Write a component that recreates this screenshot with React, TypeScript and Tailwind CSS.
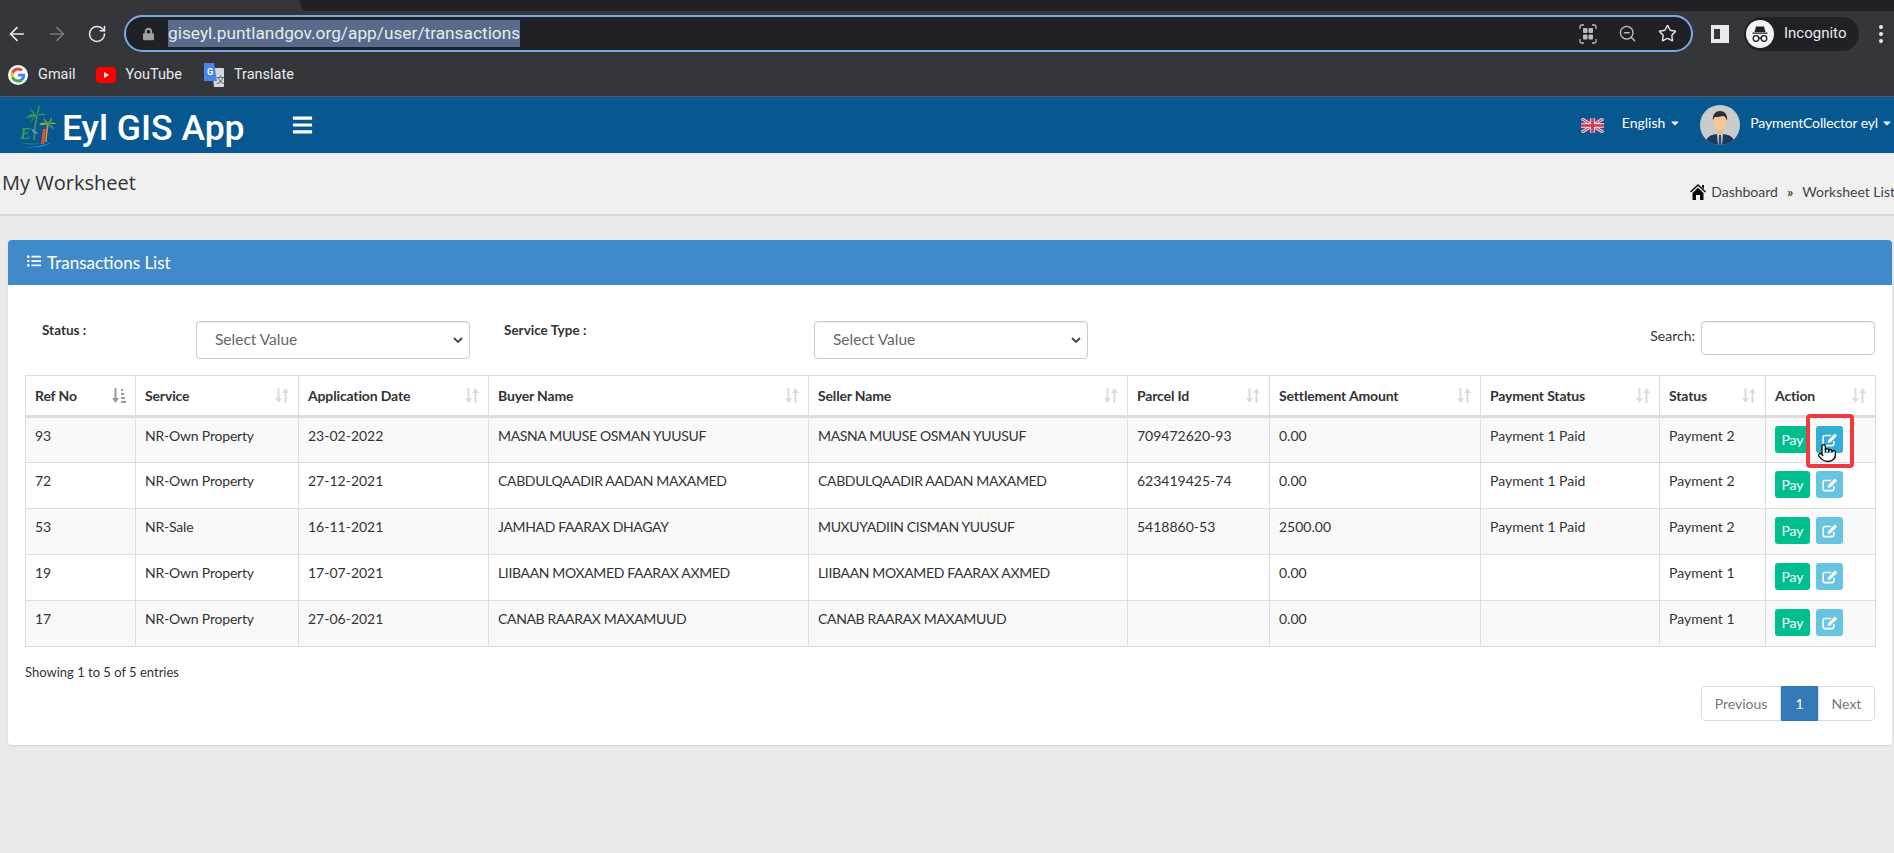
import { ArrowLeft, ArrowRight, RotateCw, ZoomOut, Star, Pointer } from 'lucide-react';
import { FaBars, FaListUl, FaLock, FaCaretDown } from 'react-icons/fa';

const rows = [
    { ref: '93', service: 'NR-Own Property', date: '23-02-2022', buyer: 'MASNA MUUSE OSMAN YUUSUF', seller: 'MASNA MUUSE OSMAN YUUSUF', parcel: '709472620-93', amount: '0.00', payment: 'Payment 1 Paid', status: 'Payment 2' },
    { ref: '72', service: 'NR-Own Property', date: '27-12-2021', buyer: 'CABDULQAADIR AADAN MAXAMED', seller: 'CABDULQAADIR AADAN MAXAMED', parcel: '623419425-74', amount: '0.00', payment: 'Payment 1 Paid', status: 'Payment 2' },
    { ref: '53', service: 'NR-Sale', date: '16-11-2021', buyer: 'JAMHAD FAARAX DHAGAY', seller: 'MUXUYADIIN CISMAN YUUSUF', parcel: '5418860-53', amount: '2500.00', payment: 'Payment 1 Paid', status: 'Payment 2' },
    { ref: '19', service: 'NR-Own Property', date: '17-07-2021', buyer: 'LIIBAAN MOXAMED FAARAX AXMED', seller: 'LIIBAAN MOXAMED FAARAX AXMED', parcel: '', amount: '0.00', payment: '', status: 'Payment 1' },
    { ref: '17', service: 'NR-Own Property', date: '27-06-2021', buyer: 'CANAB RAARAX MAXAMUUD', seller: 'CANAB RAARAX MAXAMUUD', parcel: '', amount: '0.00', payment: '', status: 'Payment 1' },
];

const columns = [
    { label: 'Ref No', width: 'w-[110px]' },
    { label: 'Service', width: 'w-[163px]' },
    { label: 'Application Date', width: 'w-[190px]' },
    { label: 'Buyer Name', width: 'w-[320px]' },
    { label: 'Seller Name', width: 'w-[319px]' },
    { label: 'Parcel Id', width: 'w-[142px]' },
    { label: 'Settlement Amount', width: 'w-[211px]' },
    { label: 'Payment Status', width: 'w-[179px]' },
    { label: 'Status', width: 'w-[106px]' },
    { label: 'Action', width: 'w-[110px]' },
];

function SortIcon({ active }: { active?: boolean }) {
    if (active) {
        return (
            <svg viewBox="0 0 14 15" className="w-[14px] h-[15px] shrink-0 text-[#9a9a9a]" fill="currentColor">
                <path d="M2.5 0h2v10H7l-3.5 5L0 10h2.5z" />
                <path d="M9 1h2v2H9zM9 5h3v2H9zM9 9h4v2H9zM9 13h5v2H9z" />
            </svg>
        );
    }
    return (
        <svg viewBox="0 0 14 15" className="w-[14px] h-[15px] shrink-0 text-[#dcdcdc]" fill="currentColor">
            <path d="M2.5 0h2v10H7l-3.5 5L0 10h2.5z" />
            <path d="M9.5 15h2V5H14L10.5 0 7 5h2.5z" />
        </svg>
    );
}

function EditIcon() {
    return (
        <svg viewBox="0 0 16 14" className="w-[16px] h-[14px]" fill="none">
            <path d="M9 2.500H3A1.800 1.800 0 001.200 4.300v6.500A1.800 1.800 0 003 12.600h7a1.800 1.800 0 001.800-1.800V8" stroke="#fff" strokeWidth="1.600" />
            <path d="M12.800.6l2.300 2.200-6.500 6.500-3 .8.700-3z" fill="#fff" />
        </svg>
    );
}

function GoogleIcon() {
    return (
        <svg viewBox="0 0 24 24" className="w-5 h-5 shrink-0">
            <circle cx="12" cy="12" r="12" fill="#fff" />
            <path fill="#4285F4" d="M20.6 12.2c0-.6-.1-1.200-.2-1.800H12v3.400h4.800c-.2 1.100-.8 2-1.800 2.700v2.200h2.900c1.700-1.600 2.700-3.800 2.700-6.500z" />
            <path fill="#34A853" d="M12 21c2.400 0 4.500-.8 5.900-2.200L15 16.500c-.8.500-1.800.9-3 .9-2.300 0-4.300-1.600-5-3.700H4v2.300C5.500 18.900 8.500 21 12 21z" />
            <path fill="#FBBC05" d="M7 13.700c-.4-1.100-.4-2.300 0-3.400V8H4c-1 2-1 4 0 8z" />
            <path fill="#EA4335" d="M12 6.600c1.300 0 2.500.5 3.400 1.300L18 5.400C16.400 3.900 14.400 3 12 3 8.500 3 5.500 5.100 4 8l3 2.300c.7-2.100 2.700-3.700 5-3.700z" />
        </svg>
    );
}

function YoutubeIcon() {
    return (
        <svg viewBox="0 0 20 16" className="w-5 h-4 shrink-0">
            <rect width="20" height="16" rx="4" fill="#f00" />
            <path d="M8 5l5 3-5 3z" fill="#fff" />
        </svg>
    );
}

function TranslateIcon() {
    return (
        <svg viewBox="0 0 20 24" className="w-[20px] h-[24px] shrink-0">
            <path d="M8 5h11a1 1 0 011 1v17a1 1 0 01-1 1H10z" fill="#d5d7da" />
            <path d="M1 0h9l3 18H1a1 1 0 01-1-1V1a1 1 0 011-1z" fill="#4a86e8" />
            <text x="3" y="12" fontSize="9" fontWeight="700" fill="#fff" fontFamily="Roboto, sans-serif">G</text>
            <text x="12" y="20" fontSize="9" fill="#555" fontFamily="'Noto Sans CJK SC', sans-serif">文</text>
        </svg>
    );
}

function IncognitoIcon() {
    return (
        <svg viewBox="0 0 28 28" className="w-7 h-7 shrink-0">
            <circle cx="14" cy="14" r="14" fill="#f1f3f4" />
            <path d="M10 6.500h8l1.500 5.500h-11zM6.500 12.500h15v1.300h-15z" fill="#202124" />
            <circle cx="10" cy="18.500" r="2.800" fill="none" stroke="#202124" strokeWidth="1.300" />
            <circle cx="18" cy="18.500" r="2.800" fill="none" stroke="#202124" strokeWidth="1.300" />
            <path d="M12.800 18.200h2.400" stroke="#202124" strokeWidth="1.300" />
        </svg>
    );
}

function TabSearchIcon() {
    return (
        <svg viewBox="0 0 18 20" className="w-[18px] h-5" fill="none" stroke="#b8babd" strokeWidth="1.300">
            <path d="M1 5V2.500A1.500 1.500 0 012.500 1H5M13 1h2.500A1.500 1.500 0 0117 2.500V5M17 15v2.500a1.500 1.500 0 01-1.500 1.500H13M5 19H2.500A1.500 1.500 0 011 17.500V15" />
            <rect x="4" y="4" width="4.500" height="5" rx="1" fill="#b8babd" stroke="none" />
            <rect x="9.500" y="4" width="4.500" height="5" rx="1" fill="#b8babd" stroke="none" />
            <rect x="4" y="10.500" width="4.500" height="5" rx="1" fill="#b8babd" stroke="none" />
            <rect x="9.500" y="10.500" width="4.500" height="5" rx="1" fill="#b8babd" stroke="none" />
        </svg>
    );
}

function LogoMark() {
    return (
        <svg viewBox="0 0 42 46" className="w-[42px] h-[46px] shrink-0">
            <path d="M20 14c-2 8-3 16-3 24" stroke="#6b8e3a" strokeWidth="1.500" fill="none" />
            <path d="M20 14c-4-3-8-2-11 2 4-1 7-1 11-2zM20 14c-3-5-7-7-8-8 2 3 4 6 8 8zM20 14c0-5 1-9 2-12 1 4 0 8-2 12zM20 14c4-3 7-3 9-1-3 0-6 0-9 1zM20 14c-4 1-6 4-7 7 2-3 4-5 7-7z" fill="#2f9e57" />
            <path d="M31 22c-1 6-2 12-2 18" stroke="#d9a02b" strokeWidth="1.500" fill="none" />
            <path d="M31 22c-3-2-6-2-9 1 3 0 6 0 9-1zM31 22c-1-3-3-5-5-6 1 2 3 5 5 6zM31 22c1-3 3-5 4-7 0 3-1 5-4 7zM31 22c3-2 6-2 9 0-3 0-6 0-9 0zM31 22c3 1 5 3 6 6-2-2-4-4-6-6z" fill="#8ab530" />
            <text x="3" y="37" fontSize="16" fontStyle="italic" fontWeight="700" fill="#2f9e57" fontFamily="'Liberation Serif', serif">E</text>
            <path d="M14 27c3 0 5 2 7 5-3 0-5-1-7-5z" fill="#4a9bd1" />
            <path d="M26 27l3 0-2 15-3 0z" fill="#e8502f" />
            <path d="M1 43c7 3 20 3 34-3-8 6-24 7-34 3z" fill="#1f9fd6" />
            <path d="M4 40c6 2 14 2 20 1-6 2-14 2-20-1z" fill="#2f9e57" />
        </svg>
    );
}

function UkFlag() {
    return (
        <svg viewBox="0 0 60 38" className="w-[23px] h-[15px] shrink-0">
            <rect width="60" height="38" fill="#3d4f8f" />
            <path d="M0 0l60 38M60 0L0 38" stroke="#e6e6ee" strokeWidth="8" />
            <path d="M0 0l60 38M60 0L0 38" stroke="#d8495a" strokeWidth="3" />
            <path d="M30 0v38M0 19h60" stroke="#e6e6ee" strokeWidth="12" />
            <path d="M30 0v38M0 19h60" stroke="#d8344a" strokeWidth="7" />
        </svg>
    );
}

function Avatar() {
    return (
        <svg viewBox="0 0 40 40" className="w-10 h-10 shrink-0">
            <defs>
                <clipPath id="avatar-clip">
                    <circle cx="20" cy="20" r="20" />
                </clipPath>
            </defs>
            <g clipPath="url(#avatar-clip)">
                <rect width="40" height="40" fill="#c9cbcc" />
                <path d="M5 40c0-8 6-11 15-11s15 3 15 11z" fill="#17395c" />
                <path d="M17 29h6l-1 11h-4z" fill="#c8d4da" />
                <path d="M19 30h2l.5 10h-3z" fill="#1d4f7a" />
                <rect x="17" y="22" width="6" height="8" fill="#e9b98c" />
                <ellipse cx="20" cy="17" rx="6.500" ry="8" fill="#f6c796" />
                <path d="M13 16c-1-7 3-10 7-10s8 3 7 10c-1-3-2-5-4-5-3 1-7 1-8 1-1 1-2 2-2 4z" fill="#2e2e30" />
            </g>
        </svg>
    );
}

function HomeIcon() {
    return (
        <svg viewBox="0 0 16 16" className="w-4 h-4 shrink-0" fill="#0a0a0a">
            <path d="M8 0l8 7.500-1 1L8 2 1 8.500l-1-1z" />
            <path d="M12 1h2v4l-2-2z" />
            <path d="M2.500 9L8 3.800 13.500 9v7H10v-5H6v5H2.500z" />
        </svg>
    );
}

function ValueSelect() {
    return (
        <div className="relative w-[274px] h-[38px] mt-[36px] shrink-0">
            <select defaultValue="" className="appearance-none w-full h-full pl-[18px] rounded-[4px] border border-[#ccc] bg-white text-[15.5px] text-[#666] shadow-[inset_0_1px_1px_rgba(0,0,0,0.075)]">
                <option value="">Select Value</option>
            </select>
            <svg viewBox="0 0 10 6" className="absolute right-[7px] top-[16px] w-[10px] h-[6px] pointer-events-none" fill="none" stroke="#444" strokeWidth="1.800">
                <path d="M1 1l4 4 4-4" />
            </svg>
        </div>
    );
}

export default function App() {
    return (
        <div className="h-[853px] w-[1894px] overflow-hidden bg-[#eaeaea] font-['Lato',sans-serif] text-[14px] text-[#333]">
            {/* browser chrome */}
            <div className="bg-[#35363a] border-b border-[#55565a] font-['Roboto',sans-serif] text-[#e8eaed]">
                <div className="h-[11px] pl-[300px]">
                    <div className="h-full bg-[#202124] rounded-bl-lg" />
                </div>
                <div className="h-[45px] flex items-center">
                    <div className="flex items-center gap-[18px] pl-[6px] pr-[17px]">
                        <ArrowLeft className="w-[22px] h-[22px] text-[#e8eaed]" strokeWidth={1.8} />
                        <ArrowRight className="w-[22px] h-[22px] text-[#77787b]" strokeWidth={1.8} />
                        <RotateCw className="w-[20px] h-[20px] ml-[1px] text-[#e8eaed]" strokeWidth={1.8} />
                    </div>
                    <div className="w-[1569px] h-[37px] flex items-center rounded-full border-2 border-[#7ba7e8] bg-[#202124] pl-[17px] pr-[14px]">
                        <FaLock className="w-[11px] h-[14px] text-[#9aa0a6] shrink-0" />
                        <span className="ml-[14px] h-[27px] px-0 flex items-center bg-[#596a8c] text-[17.3px] leading-none whitespace-nowrap">giseyl.puntlandgov.org/app/user/transactions</span>
                        <div className="ml-auto flex items-center gap-[21px]">
                            <TabSearchIcon />
                            <ZoomOut className="w-[19px] h-[19px] text-[#b8babd]" strokeWidth={1.8} />
                            <Star className="w-[19px] h-[19px] text-[#e0e1e3]" strokeWidth={1.8} />
                        </div>
                    </div>
                    <div className="w-[18px] h-[18px] ml-[18px] border-[4px] border-l-[3px] border-r-[9px] border-[#e8eaed] bg-[#35363a] shrink-0" />
                    <div className="ml-[15px] w-[115px] h-[34px] rounded-full bg-[#202124] flex items-center pl-[2px] shrink-0">
                        <IncognitoIcon />
                        <span className="ml-[10px] text-[15px] whitespace-nowrap">Incognito</span>
                    </div>
                    <div className="ml-[20px] flex flex-col gap-[3px] shrink-0">
                        <span className="w-[4px] h-[4px] rounded-full bg-[#e8eaed]" />
                        <span className="w-[4px] h-[4px] rounded-full bg-[#e8eaed]" />
                        <span className="w-[4px] h-[4px] rounded-full bg-[#e8eaed]" />
                    </div>
                </div>
                <div className="h-[40px] flex items-start pt-[7px] pl-[8px] text-[14.5px]">
                    <div className="flex items-center h-[24px]">
                        <GoogleIcon />
                        <span className="ml-[10px]">Gmail</span>
                    </div>
                    <div className="flex items-center h-[24px] ml-[20px]">
                        <YoutubeIcon />
                        <span className="ml-[10px]">YouTube</span>
                    </div>
                    <div className="flex items-center h-[24px] ml-[22px]">
                        <TranslateIcon />
                        <span className="ml-[10px]">Translate</span>
                    </div>
                </div>
            </div>

            {/* app navbar */}
            <div className="h-[56px] bg-[#075890] flex items-center text-white">
                <div className="pl-[17px]">
                    <LogoMark />
                </div>
                <span className="ml-[3px] mt-[8px] font-['Roboto',sans-serif] font-medium text-[35.5px] leading-none whitespace-nowrap">Eyl GIS App</span>
                <FaBars className="ml-[46px] w-[23px] h-[22px]" />
                <div className="ml-auto flex items-center">
                    <UkFlag />
                    <span className="ml-[18px] mb-[5px]">English</span>
                    <FaCaretDown className="ml-[5px] mb-[5px] w-[10px] h-[12px]" />
                    <div className="ml-[20px]">
                        <Avatar />
                    </div>
                    <span className="ml-[10px] mb-[5px] whitespace-nowrap tracking-[-0.15px]">PaymentCollector eyl</span>
                    <FaCaretDown className="ml-[4px] mb-[5px] mr-[2px] w-[10px] h-[12px]" />
                </div>
            </div>

            {/* page title */}
            <div className="mt-[2px] h-[61px] bg-[#f0f0f0] border-b-2 border-[#d6d6d6] flex justify-between">
                <h1 className="pl-[2px] pt-[14px] font-['Open_Sans',sans-serif] text-[20px] leading-[28px]">My Worksheet</h1>
                <div className="flex items-center self-start mt-[26px] whitespace-nowrap text-[#444]">
                    <HomeIcon />
                    <span className="ml-[5px]">Dashboard</span>
                    <span className="mx-[9px] font-bold">»</span>
                    <span className="-mr-[1px]">Worksheet List</span>
                </div>
            </div>

            {/* card */}
            <div className="mt-[24px] ml-[8px] w-[1884px] h-[505px] bg-white rounded-[4px] shadow-[0_1px_2px_rgba(0,0,0,0.1)]">
                <div className="h-[45px] bg-[#418aca] rounded-t-[4px] flex items-center pl-[19px] text-white text-[17px]">
                    <FaListUl className="w-[14px] h-[14px] mb-[4px]" />
                    <span className="ml-[6px]">Transactions List</span>
                </div>

                <div className="pl-[17px] pr-[17px]">
                    <div className="h-[90px] flex items-start">
                        <label className="w-[171px] pl-[17px] mt-[35px] font-bold text-[13.500px] leading-5">Status :</label>
                        <ValueSelect />
                        <label className="w-[344px] pl-[34px] mt-[35px] font-bold text-[13.500px] leading-5">Service Type :</label>
                        <ValueSelect />
                        <div className="ml-auto mt-[36px] flex items-start">
                            <span className="mr-[6px] mt-[5px] leading-5">Search:</span>
                            <input type="search" className="w-[174px] h-[34px] rounded-[4px] border border-[#ccc] bg-white shadow-[inset_0_1px_1px_rgba(0,0,0,0.075)]" />
                        </div>
                    </div>

                    <table className="w-[1850px] table-fixed border-collapse border border-[#ddd]">
                        <colgroup>
                            {columns.map(col => (
                                <col key={col.label} className={col.width} />
                            ))}
                        </colgroup>
                        <thead>
                            <tr className="h-[41px]">
                                {columns.map((col, idx) => (
                                    <th key={col.label} className="border border-b-[3px] border-[#ddd] px-[9px] pb-[1px] text-left font-bold tracking-[-0.15px]">
                                        <div className="flex items-center justify-between">
                                            <span className="whitespace-nowrap">{col.label}</span>
                                            <SortIcon active={idx === 0} />
                                        </div>
                                    </th>
                                ))}
                            </tr>
                        </thead>
                        <tbody>
                            {rows.map((row, idx) => (
                                <tr key={row.ref} className={`h-[46px] ${idx % 2 === 0 ? 'bg-[#f9f9f9]' : 'bg-white'}`}>
                                    <td className="border border-[#ddd] px-[9px] pt-[7px] align-top">{row.ref}</td>
                                    <td className="border border-[#ddd] px-[9px] pt-[7px] align-top tracking-[-0.2px]">{row.service}</td>
                                    <td className="border border-[#ddd] px-[9px] pt-[7px] align-top">{row.date}</td>
                                    <td className="border border-[#ddd] px-[9px] pt-[7px] align-top tracking-[-0.35px]">{row.buyer}</td>
                                    <td className="border border-[#ddd] px-[9px] pt-[7px] align-top tracking-[-0.35px]">{row.seller}</td>
                                    <td className="border border-[#ddd] px-[9px] pt-[7px] align-top">{row.parcel}</td>
                                    <td className="border border-[#ddd] px-[9px] pt-[7px] align-top">{row.amount}</td>
                                    <td className="border border-[#ddd] px-[9px] pt-[7px] align-top">{row.payment}</td>
                                    <td className="border border-[#ddd] px-[9px] pt-[7px] align-top">{row.status}</td>
                                    <td className="border border-[#ddd] px-[9px] pt-[8px] align-top">
                                        <div className="relative flex gap-[6px]">
                                            <button className="w-[35px] h-[27px] rounded-[3px] bg-[#00bf8f] text-white text-[14px]">Pay</button>
                                            <button className={`w-[27px] h-[27px] rounded-[3px] flex items-center justify-center text-white ${idx === 0 ? 'bg-[#31aed4]' : 'bg-[#67c5e1]'}`}>
                                                <EditIcon />
                                            </button>
                                            {idx === 0 && (
                                                <>
                                                    <div className="absolute left-[31px] -top-[12px] w-[48px] h-[54px] rounded-[4px] border-4 border-[#ef3b3f]" />
                                                    <Pointer className="absolute left-[42px] top-[17px] w-[20px] h-[20px] fill-white text-black" strokeWidth={1.5} />
                                                </>
                                            )}
                                        </div>
                                    </td>
                                </tr>
                            ))}
                        </tbody>
                    </table>

                    <div className="flex justify-between">
                        <div className="pt-[16px] text-[13px]">Showing 1 to 5 of 5 entries</div>
                        <div className="mt-[39px] flex h-[35px] text-[#777]">
                            <span className="w-[80px] flex items-center justify-center rounded-l-[4px] border border-[#ddd] bg-white">Previous</span>
                            <span className="w-[37px] flex items-center justify-center bg-[#337ab7] text-white">1</span>
                            <span className="w-[57px] flex items-center justify-center rounded-r-[4px] border border-[#ddd] bg-white">Next</span>
                        </div>
                    </div>
                </div>
            </div>
        </div>
    );
}
